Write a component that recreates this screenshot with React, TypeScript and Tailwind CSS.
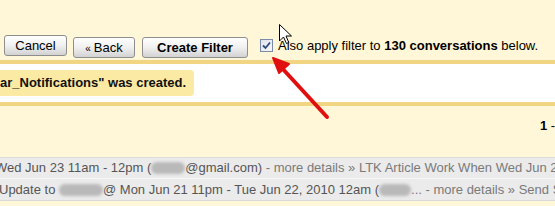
import React from "react";

function Button({ children, bold }: { children: React.ReactNode; bold?: boolean }) {
  return (
    <button
      className={
        "h-[21px] rounded-[3px] border border-[#8e8e8e] bg-gradient-to-b from-[#ffffff] via-[#f0f0f0] to-[#d2d2d2] text-[13px] leading-none text-black " +
        (bold ? "font-bold" : "")
      }
    >
      {children}
    </button>
  );
}

function Smudge({ w }: { w: number }) {
  return (
    <span
      className="inline-block h-[12px] shrink-0 rounded-full bg-[#b9b9b9] blur-[1.5px]"
      style={{ width: w }}
    />
  );
}

export default function App() {
  return (
    <div
      className="relative h-[206px] w-[555px] overflow-hidden bg-[#fff7d7]"
      style={{ fontFamily: '"Liberation Sans", Arial, sans-serif' }}
    >
      {/* filter actions */}
      <div className="flex h-[60px] items-start pl-[4px] pt-[35px]">
        <div className="flex">
          <Button>
            <span className="block w-[61px]">Cancel</span>
          </Button>
          <span className="ml-[6px]">
            <Button>
              <span className="block w-[60px]">
                <span className="mr-[3px] text-[10px]">«</span>Back
              </span>
            </Button>
          </span>
          <span className="ml-[7px]">
            <Button bold>
              <span className="block w-[104px]">Create Filter</span>
            </Button>
          </span>
        </div>
        <div className="ml-[12px] mt-[3px] flex items-center">
          <span className="flex h-[13px] w-[13px] items-center justify-center border border-[#7b8aa8] bg-gradient-to-br from-[#dfe3ec] to-[#f7f8fb]">
            <svg width="9" height="9" viewBox="0 0 9 9">
              <path d="M1 4.5 L3.5 7 L8 1.5" fill="none" stroke="#2f4a7c" strokeWidth="1.8" />
            </svg>
          </span>
          <span className="ml-[5px] whitespace-nowrap text-[13px] leading-[15px] text-black">
            Also apply filter to <b>130 conversations</b> below.
          </span>
        </div>
      </div>

      <div className="h-[4px] bg-[#f2d582]" />

      {/* notification */}
      <div className="h-[38px] bg-white pt-[6px]">
        <div className="ml-[-60px] inline-flex h-[26px] items-center rounded-[4px] bg-[#fbeaa4] pl-[60px] pr-[8px]">
          <span className="whitespace-nowrap text-[13px] font-bold text-[#111]">
            ar_Notifications" was created.
          </span>
        </div>
      </div>

      <div className="h-[4px] bg-[#f2d582]" />

      {/* pager */}
      <div className="flex h-[51px] pl-[540px] pt-[10px]">
        <span className="whitespace-nowrap text-[13px] text-black">
          <b>1</b> - 50 of 130
        </span>
      </div>

      {/* conversation rows */}
      <div className="border-t border-[#dcdcdc] bg-[#f2f2f2] text-[13px]">
        <div className="flex h-[21px] items-center whitespace-nowrap border-b border-[#f7f7f7] bg-[#ebebeb]">
          <span className="ml-[-5px] shrink-0 text-[#555]">Wed Jun 23 11am - 12pm (</span>
          <Smudge w={34} />
          <span className="shrink-0 text-[#555]">@gmail.com)</span>
          <span className="shrink-0 text-[#7a7a7a]">&nbsp;- more details » LTK Article Work When Wed Jun 23</span>
        </div>
        <div className="flex h-[22px] items-center whitespace-nowrap border-b border-[#d8d8d8] bg-[#ebebeb]">
          <span className="ml-[-1px] shrink-0 text-[#555]">Update to&nbsp;</span>
          <Smudge w={44} />
          <span className="shrink-0 text-[#555]">@ Mon Jun 21 11pm - Tue Jun 22, 2010 12am (</span>
          <Smudge w={32} />
          <span className="shrink-0 text-[#7a7a7a]">... - more details » Send Status</span>
        </div>
      </div>

      {/* annotations drawn over the screenshot */}
      <svg
        className="pointer-events-none absolute left-0 top-0"
        width="555"
        height="206"
        viewBox="0 0 555 206"
      >
        <line x1="327" y1="117" x2="281" y2="67" stroke="#e01010" strokeWidth="4" strokeLinecap="round" />
        <path d="M273 58 L289 64 L279 73 Z" fill="#e01010" stroke="#e01010" strokeWidth="2" strokeLinejoin="round" />
        <path
          d="M279.5 24.5 L279.5 41 L283.5 37 L286.5 43.5 L288.8 42.5 L286 36 L291.5 36 Z"
          fill="#fff"
          stroke="#000"
          strokeWidth="1"
          strokeLinejoin="round"
        />
      </svg>
    </div>
  );
}
